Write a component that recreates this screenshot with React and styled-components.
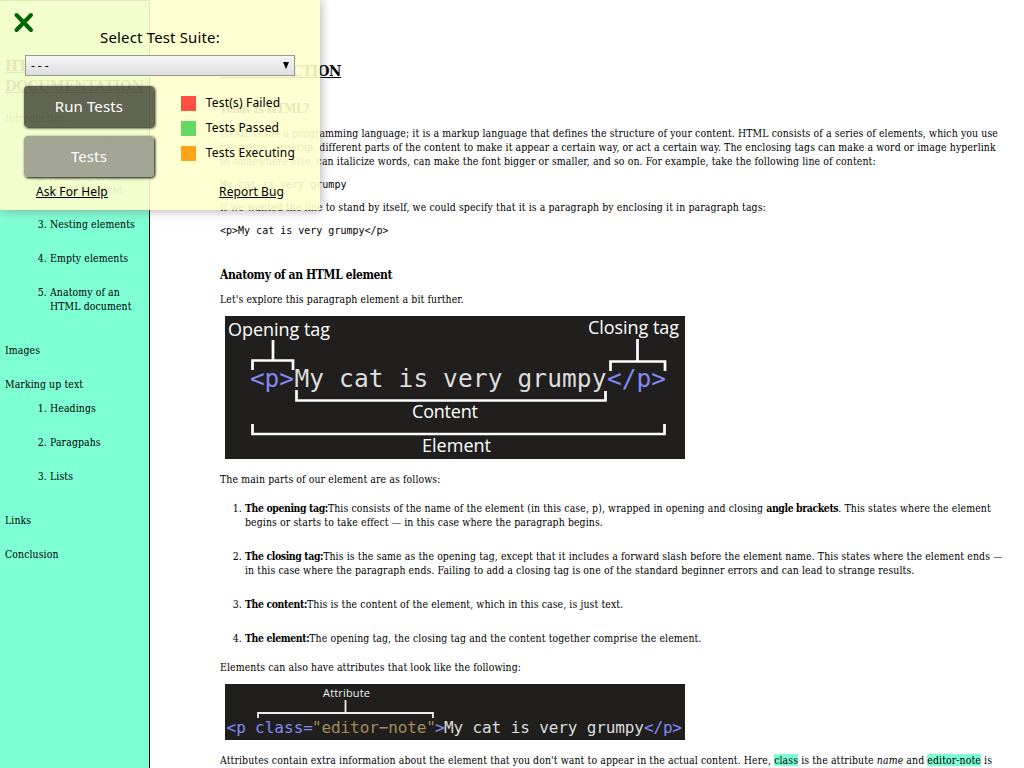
import React from "react";
import styled, { createGlobalStyle } from "styled-components";

const Global = createGlobalStyle`
  * { box-sizing: border-box; }
  body { margin: 0; background: #fff; overflow: hidden; color: #000;
    font: 10.4px/14px "Roboto Slab", "DejaVu Serif Condensed", "DejaVu Serif", serif;
    font-stretch: condensed; letter-spacing: 0.11px; }
  p, h1, h2, h3, ol, li { margin: 0; padding: 0; font-size: inherit; }
  b { line-height: 10px; letter-spacing: -0.38px; }
`;

const Page = styled.div`
  display: flex;
  height: 768px;
  overflow: hidden;
`;
const Sidebar = styled.nav`
  flex: none;
  width: 150px;
  padding: 55px 0 0 5px;
  background: #7fffd4;
  border-right: 1px solid #000;
  border-top: 1px solid #000;
  white-space: nowrap;
`;
const SideTitle = styled.h1`
  && { font-size: 15px; }
  line-height: 20px;
  font-weight: 700;
  letter-spacing: -0.34px;
  text-decoration: underline;
  margin-bottom: 15px;
`;
const NavItem = styled.div`
  margin-bottom: ${(p) => p.$gap ?? 20}px;
`;
const NavList = styled.ol`
  && { padding-left: 45px; margin-bottom: 30px; }
  li + li { margin-top: 20px; }
`;
const Main = styled.main`
  flex: none;
  width: 874px;
  padding: 60px 0 0 70px;
  white-space: nowrap;
`;
const Heading = styled.h2`
  && { font-size: 15px; }
  line-height: 23px;
  height: 21px;
  letter-spacing: -0.45px;
  text-decoration: underline;
`;
const SubHeading = styled.h3`
  && { font-size: 12px; margin-top: ${(p) => p.$top}px; }
  line-height: 16px;
  height: 16px;
  letter-spacing: -0.36px;
`;
const Para = styled.p`
  && { margin-top: ${(p) => p.$top}px; }
`;
const Code = styled.code`
  display: block;
  margin-top: 9px;
  height: 14px;
  font: 10px/16px "DejaVu Sans Mono", monospace;
  letter-spacing: 0;
`;
const Figure = styled.svg`
  display: block;
  margin: ${(p) => p.$top}px 0 0 5px;
  font-stretch: normal;
  letter-spacing: 0;
`;
const Parts = styled.ol`
  && { padding-left: 25px; margin-top: 15px; }
  li + li { margin-top: 20px; }
`;
const Mark = styled.span`
  background: #7fffd4;
`;

const Panel = styled.aside`
  position: absolute;
  top: 0;
  left: 0;
  width: 320px;
  height: 210px;
  padding: 0 25px;
  background: rgba(255, 255, 204, 0.9);
  box-shadow: 1px 1px 10px rgba(128, 128, 128, 0.6);
  font: 12px/16px "Noto Sans", sans-serif;
`;
const Close = styled.svg`
  position: absolute;
  left: 13px;
  top: 12px;
`;
const Label = styled.div`
  padding-top: 27px;
  height: 55px;
  font-size: 15px;
  line-height: 20px;
  letter-spacing: 0.15px;
  text-align: center;
`;
const Select = styled.div`
  display: flex;
  justify-content: space-between;
  align-items: center;
  height: 21px;
  padding: 0 4px 0 5px;
  border: 1px solid #999;
  background: linear-gradient(#f6f6f6, #dedede);
  font-size: 12px;
  letter-spacing: 3px;
`;
const Columns = styled.div`
  display: flex;
  margin: 10px 0 0 -1px;
`;
const Buttons = styled.div`
  display: flex;
  flex-direction: column;
  gap: 9px;
  width: 131px;
`;
const Button = styled.button`
  height: 41px;
  padding: 0 0 2px;
  border: 0;
  border-radius: 4px;
  background: ${(p) => (p.$dim ? "rgba(160, 162, 147, 0.97)" : "rgba(0, 0, 0, 0.6)")};
  box-shadow: 1px 1px 3px 0 #000;
  color: #fff;
  font: 15px/20px "Noto Sans", sans-serif;
  letter-spacing: 0.1px;
`;
const Legend = styled.div`
  display: flex;
  flex-direction: column;
  gap: 9px;
  margin: 9px 0 0 27px;
`;
const LegendItem = styled.div`
  display: flex;
  align-items: center;
  gap: 10px;
  height: 16px;
  line-height: 16px;
  letter-spacing: 0.18px;
  white-space: nowrap;
  &::before {
    content: "";
    width: 15px;
    height: 15px;
    background: ${(p) => p.$color};
  }
`;
const Links = styled.div`
  display: flex;
  justify-content: space-between;
  padding: 0 11px;
  margin-top: 6px;
  letter-spacing: 0.1px;
  text-decoration: underline;
  span { line-height: 18px; }
`;

const sans = { fontFamily: "Open Sans, Noto Sans, sans-serif" };
const mono = { fontFamily: "DejaVu Sans Mono, monospace" };

function ElementFigure() {
  return (
    <Figure $top={10} width="460" height="143" viewBox="0 0 460 143">
      <rect width="460" height="143" fill="#201f1e" />
      <g fill="#fff" fontSize="18" style={sans}>
        <text x="3" y="20" textLength="102">Opening tag</text>
        <text x="363" y="18" textLength="91">Closing tag</text>
        <text x="187" y="102" textLength="66">Content</text>
        <text x="197" y="136" textLength="69">Element</text>
      </g>
      <g fontSize="24.5" style={mono}>
        <text x="25" y="71" fill="#8489f5" textLength="44">{"<p>"}</text>
        <text x="69.5" y="71" fill="#ddd" textLength="312">My cat is very grumpy</text>
        <text x="382" y="71" fill="#8489f5" textLength="59">{"</p>"}</text>
      </g>
      <g fill="none" stroke="#fff" strokeWidth="2.7">
        <path d="M27.5 54V44.5H68V54M48 44V24M385.500 55V45.500H440V55M412.500 45V23M71.500 74V84.500H380.500V75M27.500 108V118H439.500V108" />
      </g>
    </Figure>
  );
}

function AttributeFigure() {
  return (
    <Figure $top={10} width="460" height="56" viewBox="0 0 460 56">
      <rect width="460" height="56" fill="#201f1e" />
      <text x="98" y="13" fontSize="11" fill="#eee" textLength="47" style={sans}>Attribute</text>
      <g fontSize="16" style={mono}>
        <text x="1.500" y="49" fill="#8489f5">{"<p"}</text>
        <text x="30" y="49" fill="#8489f5" textLength="58">class=</text>
        <text x="87" y="49" fill="#a98b55" textLength="124">"editor−note"</text>
        <text x="210" y="49" fill="#8489f5">{">"}</text>
        <text x="219" y="49" fill="#ddd" textLength="200">My cat is very grumpy</text>
        <text x="419" y="49" fill="#8489f5" textLength="38">{"</p>"}</text>
      </g>
      <path d="M33 34V29H208V34M120.500 29V16" fill="none" stroke="#eee" strokeWidth="1.800" />
    </Figure>
  );
}

export default function App() {
  return (
    <>
      <Global />
      <Page>
        <Sidebar>
          <SideTitle>HTML<br />DOCUMENTATION</SideTitle>
          <NavItem $gap={10}>Introduction</NavItem>
          <NavList>
            <li>What is HTML?</li>
            <li>Anatomy of an<br />HTML element</li>
            <li>Nesting elements</li>
            <li>Empty elements</li>
            <li>Anatomy of an<br />HTML document</li>
          </NavList>
          <NavItem>Images</NavItem>
          <NavItem $gap={10}>Marking up text</NavItem>
          <NavList>
            <li>Headings</li>
            <li>Paragpahs</li>
            <li>Lists</li>
          </NavList>
          <NavItem>Links</NavItem>
          <NavItem>Conclusion</NavItem>
        </Sidebar>
        <Main>
          <Heading>INTRODUCTION</Heading>
          <SubHeading $top={20}>What is HTML?</SubHeading>
          <Para $top={9}>
            HTML is not a programming language; it is a markup language that defines the structure of your content. HTML consists of a series of elements, which you use<br />
            to enclose, or wrap, different parts of the content to make it appear a certain way, or act a certain way. The enclosing tags can make a word or image hyperlink<br />
            to somewhere else, can italicize words, can make the font bigger or smaller, and so on. For example, take the following line of content:
          </Para>
          <Code>My cat is very grumpy</Code>
          <Para $top={9}>If we wanted the line to stand by itself, we could specify that it is a paragraph by enclosing it in paragraph tags:</Para>
          <Code>{"<p>My cat is very grumpy</p>"}</Code>
          <SubHeading $top={30}>Anatomy of an HTML element</SubHeading>
          <Para $top={9}>Let's explore this paragraph element a bit further.</Para>
          <ElementFigure />
          <Para $top={13}>The main parts of our element are as follows:</Para>
          <Parts>
            <li>
              <b>The opening tag:</b>This consists of the name of the element (in this case, p), wrapped in opening and closing <b>angle brackets</b>. This states where the element<br />
              begins or starts to take effect — in this case where the paragraph begins.
            </li>
            <li>
              <b>The closing tag:</b>This is the same as the opening tag, except that it includes a forward slash before the element name. This states where the element ends —<br />
              in this case where the paragraph ends. Failing to add a closing tag is one of the standard beginner errors and can lead to strange results.
            </li>
            <li><b>The content:</b>This is the content of the element, which in this case, is just text.</li>
            <li><b>The element:</b>The opening tag, the closing tag and the content together comprise the element.</li>
          </Parts>
          <Para $top={15}>Elements can also have attributes that look like the following:</Para>
          <AttributeFigure />
          <Para $top={13}>
            Attributes contain extra information about the element that you don't want to appear in the actual content. Here, <Mark>class</Mark> is the attribute <i>name</i> and <Mark>editor-note</Mark> is
          </Para>
        </Main>
      </Page>
      <Panel>
        <Close width="22" height="21" viewBox="0 0 22 21">
          <path d="M3.500 3L18 18M18 3L3.500 18" stroke="#060" strokeWidth="4" strokeLinecap="round" />
        </Close>
        <Label>Select Test Suite:</Label>
        <Select>
          <span>---</span>
          <svg width="8" height="8" viewBox="0 0 8 8"><path d="M1 0H7L4 7Z" /></svg>
        </Select>
        <Columns>
          <Buttons>
            <Button>Run Tests</Button>
            <Button $dim>Tests</Button>
          </Buttons>
          <Legend>
            <LegendItem $color="#ff4f42"><span>Test(s) Failed</span></LegendItem>
            <LegendItem $color="#63d863"><span>Tests Passed</span></LegendItem>
            <LegendItem $color="#ffa318"><span>Tests Executing</span></LegendItem>
          </Legend>
        </Columns>
        <Links><span>Ask For Help</span><span>Report Bug</span></Links>
      </Panel>
    </>
  );
}
